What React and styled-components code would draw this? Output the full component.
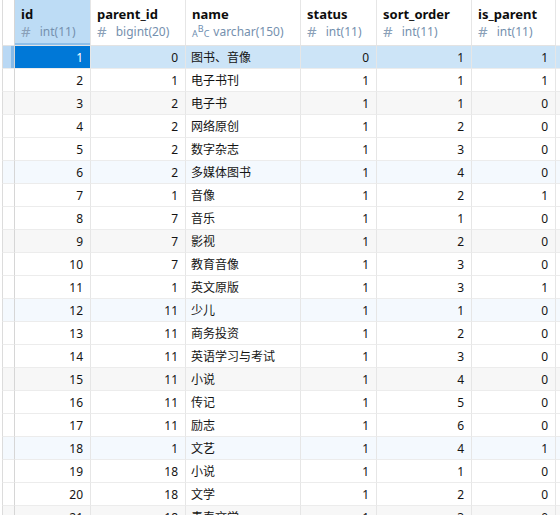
import React from "react";
import styled, { createGlobalStyle, css } from "styled-components";

const GlobalStyle = createGlobalStyle`
  html, body {
    margin: 0;
    padding: 0;
    background: #ffffff;
    overflow: hidden;
  }
  body {
    font-family: "Noto Sans", "Noto Sans CJK SC", sans-serif;
    color: #111111;
  }
`;

const columns = [
  { key: "id", label: "id", type: "int(11)", kind: "num", active: true },
  { key: "parent_id", label: "parent_id", type: "bigint(20)", kind: "num" },
  { key: "name", label: "name", type: "varchar(150)", kind: "text" },
  { key: "status", label: "status", type: "int(11)", kind: "num" },
  { key: "sort_order", label: "sort_order", type: "int(11)", kind: "num" },
  { key: "is_parent", label: "is_parent", type: "int(11)", kind: "num" },
];

const rows = [
  [1, 0, "图书、音像", 0, 1, 1],
  [2, 1, "电子书刊", 1, 1, 1],
  [3, 2, "电子书", 1, 1, 0],
  [4, 2, "网络原创", 1, 2, 0],
  [5, 2, "数字杂志", 1, 3, 0],
  [6, 2, "多媒体图书", 1, 4, 0],
  [7, 1, "音像", 1, 2, 1],
  [8, 7, "音乐", 1, 1, 0],
  [9, 7, "影视", 1, 2, 0],
  [10, 7, "教育音像", 1, 3, 0],
  [11, 1, "英文原版", 1, 3, 1],
  [12, 11, "少儿", 1, 1, 0],
  [13, 11, "商务投资", 1, 2, 0],
  [14, 11, "英语学习与考试", 1, 3, 0],
  [15, 11, "小说", 1, 4, 0],
  [16, 11, "传记", 1, 5, 0],
  [17, 11, "励志", 1, 6, 0],
  [18, 1, "文艺", 1, 4, 1],
  [19, 18, "小说", 1, 1, 0],
  [20, 18, "文学", 1, 2, 0],
  [21, 18, "青春文学", 1, 3, 0],
];

const Grid = styled.div`
  display: grid;
  grid-template-columns: 13px 76px 95px 115px 76px 95px 84px 1fr;
  grid-auto-rows: 23px;
  grid-template-rows: 46px;
  padding-left: 2px;
  width: 560px;
  height: 515px;
  box-sizing: border-box;
  overflow: hidden;
`;

const Cell = styled.div`
  box-sizing: border-box;
  border-right: 1px solid #e6e6e6;
  border-bottom: 1px solid #ececec;
  font-size: 12px;
  white-space: nowrap;
  overflow: hidden;
  display: flex;
  align-items: center;
  background: ${(p) => p.$bg || "transparent"};
`;

const HeadCell = styled(Cell)`
  flex-direction: column;
  align-items: flex-start;
  justify-content: flex-start;
  padding: 5px 0 0 6px;
  border-bottom-color: #e3e3e3;
  ${(p) =>
    p.$active &&
    css`
      background: #bddcf5;
      box-shadow: inset 0 -2px 0 #8fc0ea;
    `}
`;

const Corner = styled(Cell)`
  border-left: 1px solid #dcdcdc;
  border-right-color: #d6d6d6;
  border-bottom-color: #e3e3e3;
`;

const Indicator = styled(Cell)`
  border-left: 1px solid #dcdcdc;
  border-right-color: #d6d6d6;
  ${(p) =>
    p.$selected &&
    css`
      background: #b9d8f4;
      box-shadow: inset -3px 0 0 #88bbe8;
    `}
`;

const ColName = styled.div`
  font-size: 13px;
  font-weight: 700;
  line-height: 18px;
  color: #0d0d0d;
`;

const ColType = styled.div`
  font-size: 12px;
  line-height: 17px;
  height: 17px;
  color: #7590ae;
  display: flex;
  align-items: center;
`;

const Hash = styled.span`
  font-size: 15px;
  line-height: 1;
  margin-right: 9px;
  color: #8aa0b8;
`;

const AbcIcon = styled.span`
  display: inline-flex;
  align-items: center;
  margin-right: 4px;
  font-size: 9px;
  line-height: 1;
  color: #6d8db0;
`;

const Letter = styled.span`
  position: relative;
  top: ${(p) => (p.$up ? "-3px" : "2px")};
`;

const DataCell = styled(Cell)`
  justify-content: ${(p) => (p.$kind === "num" ? "flex-end" : "flex-start")};
  padding: ${(p) => (p.$kind === "num" ? "0 7px 0 0" : "0 0 0 5px")};
  color: ${(p) => (p.$current ? "#ffffff" : "#141414")};
  background: ${(p) => (p.$current ? "#0078d7" : p.$bg || "transparent")};
`;

const Filler = styled(Cell)`
  border-right: none;
`;

function stripe(n, selected) {
  if (selected) return "#cce4f7";
  if (n % 3 !== 0) return "#ffffff";
  return (n / 3) % 2 === 1 ? "#f7f7f7" : "#f4f9fe";
}

function TypeLabel({ col }) {
  if (col.kind === "text") {
    return (
      <ColType>
        <AbcIcon>
          <Letter>A</Letter>
          <Letter $up>B</Letter>
          <Letter>C</Letter>
        </AbcIcon>
        {col.type}
      </ColType>
    );
  }
  return (
    <ColType>
      <Hash>#</Hash>
      {col.type}
    </ColType>
  );
}

export default function App() {
  return (
    <>
      <GlobalStyle />
      <Grid>
        <Corner />
        {columns.map((col) => (
          <HeadCell key={col.key} $active={col.active}>
            <ColName>{col.label}</ColName>
            <TypeLabel col={col} />
          </HeadCell>
        ))}
        <Filler />
        {rows.map((r, i) => {
          const n = i + 1;
          const selected = n === 1;
          const bg = stripe(n, selected);
          return (
            <React.Fragment key={n}>
              <Indicator $selected={selected} $bg={selected ? undefined : bg} />
              {r.map((v, c) => (
                <DataCell
                  key={c}
                  $kind={columns[c].kind}
                  $current={selected && c === 0}
                  $bg={bg}
                >
                  {v}
                </DataCell>
              ))}
              <Filler $bg={bg} />
            </React.Fragment>
          );
        })}
      </Grid>
    </>
  );
}
